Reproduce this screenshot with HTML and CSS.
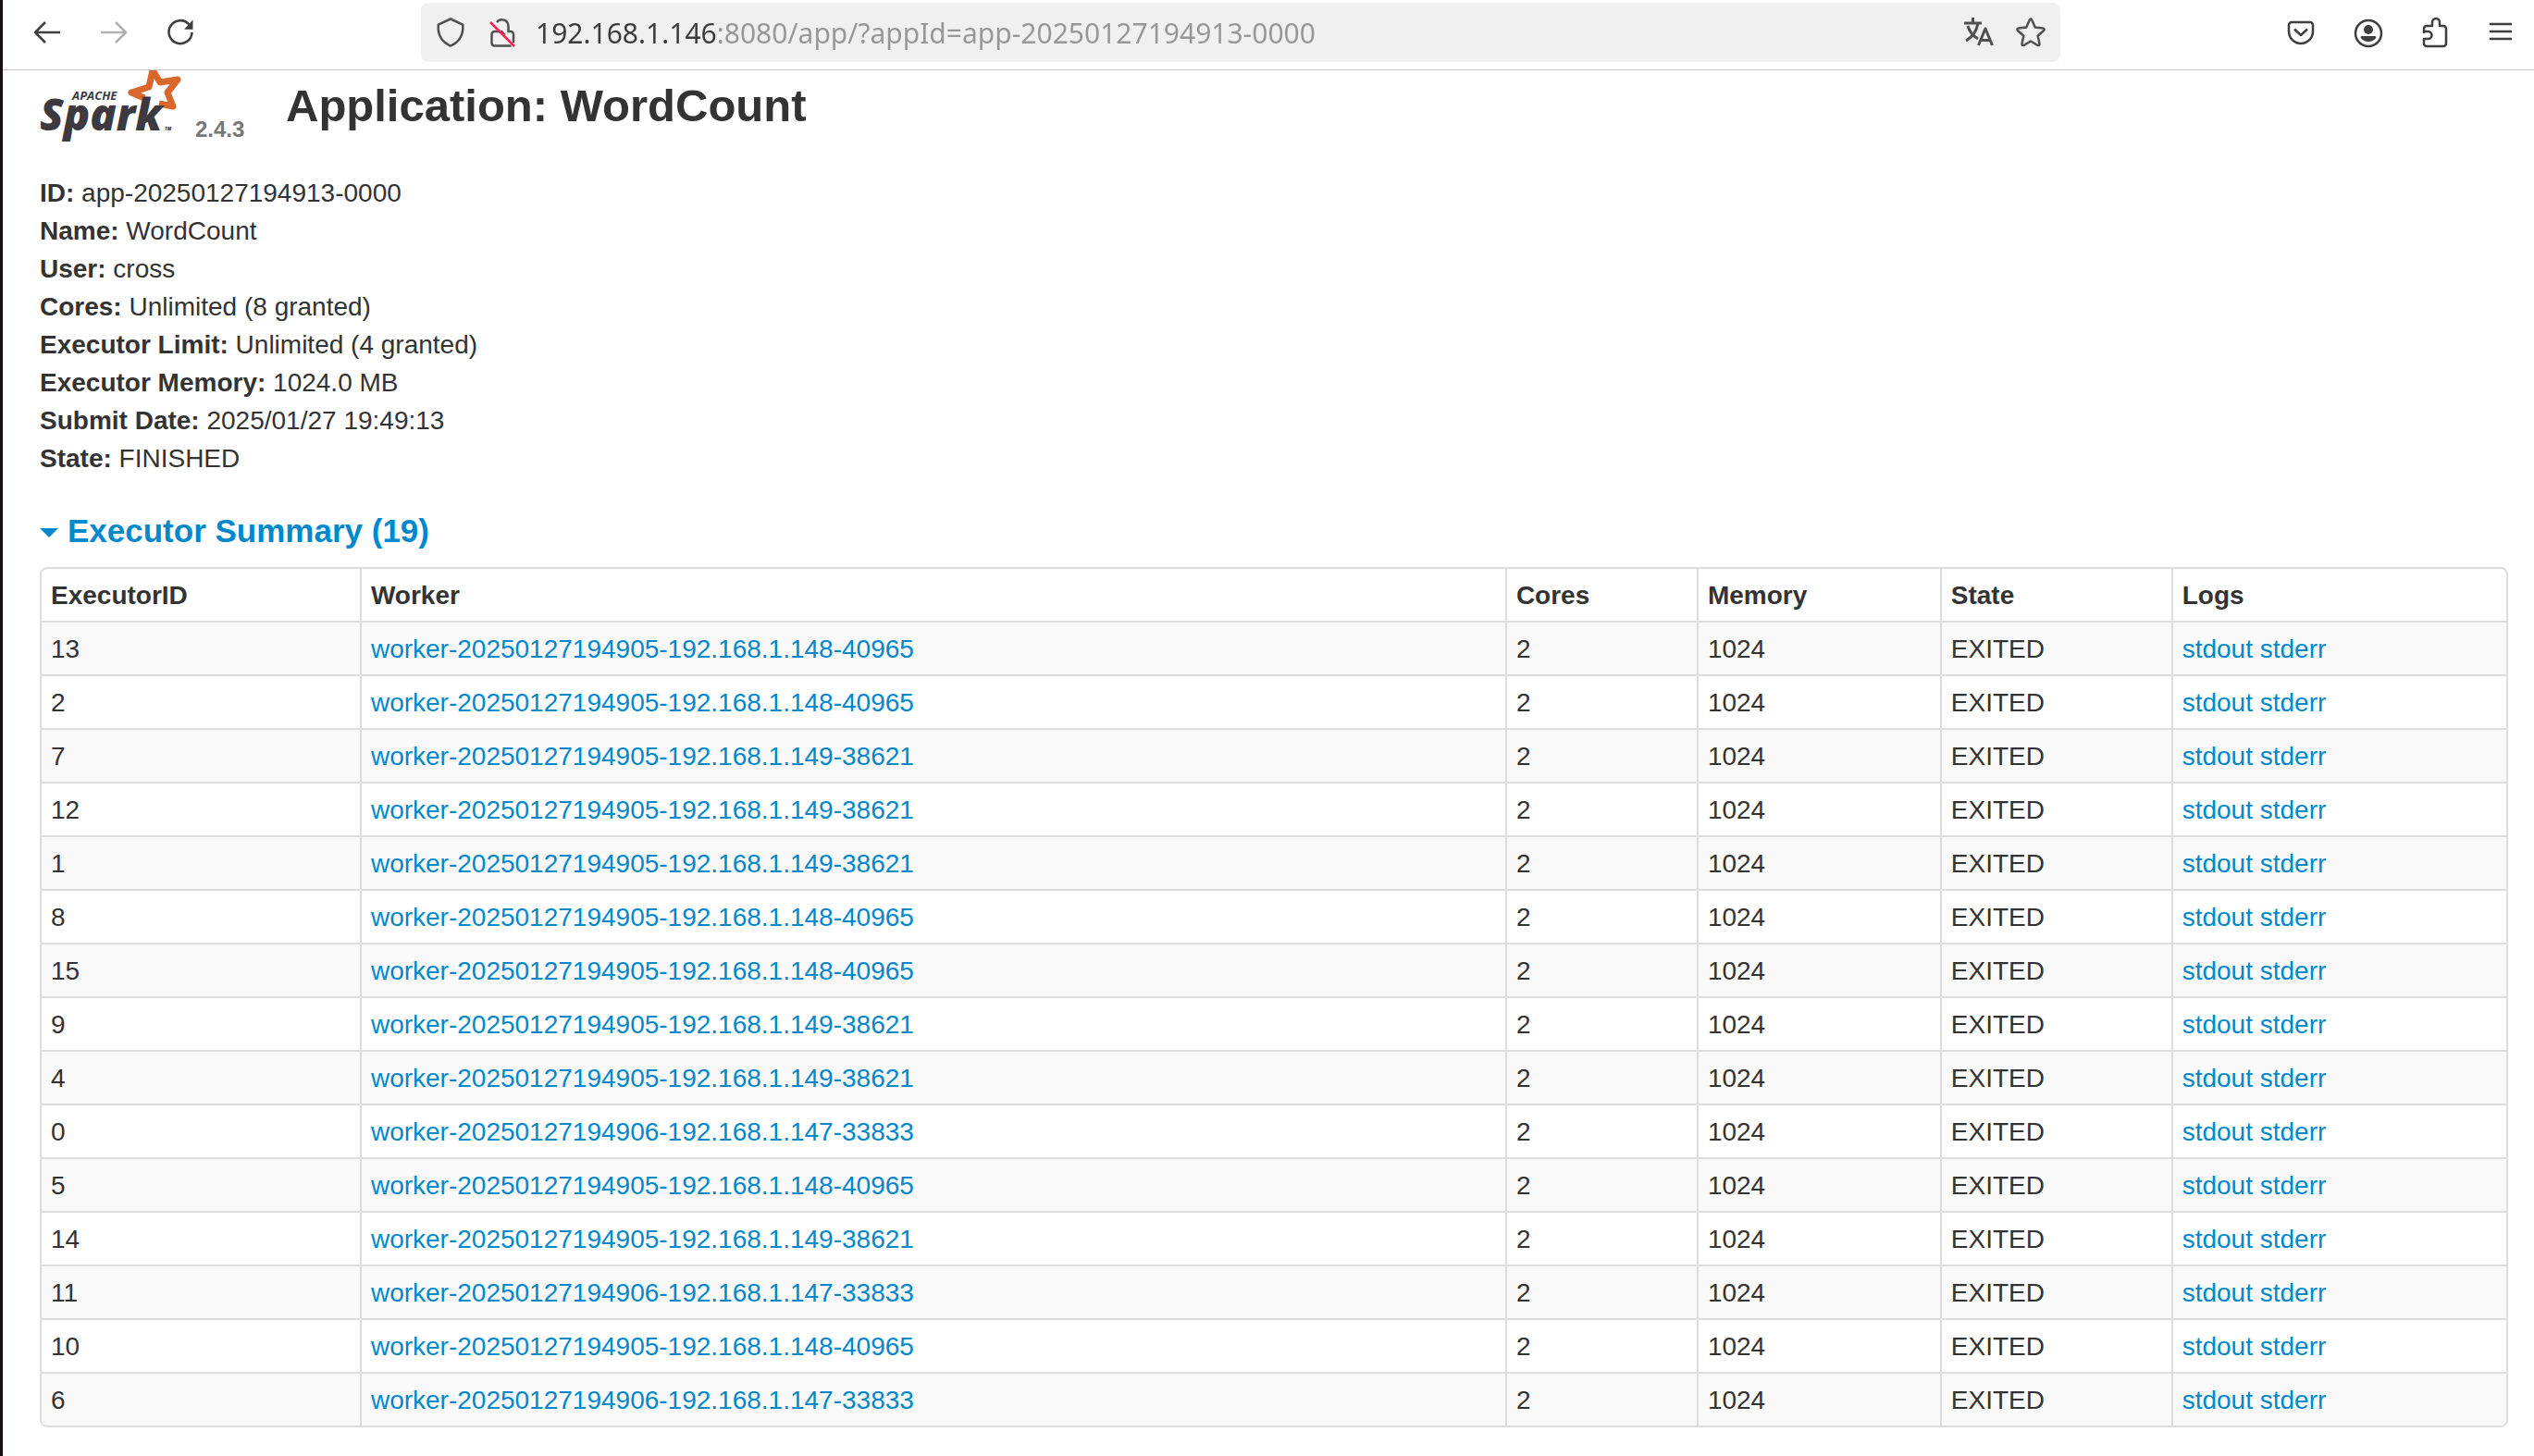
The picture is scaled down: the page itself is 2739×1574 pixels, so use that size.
FILE: index.html
```html
<!DOCTYPE html>
<html lang="en">
<head>
<meta charset="utf-8">
<title>Application: WordCount</title>
<link rel="stylesheet" href="styles.css">
</head>
<body>
<nav class="toolbar" aria-label="Browser">
  <button class="tool" type="button" aria-label="Back"><svg class="icon" viewBox="0 0 32 32"><path d="M30 16H4M14 5 3 16l11 11"/></svg></button>
  <button class="tool" type="button" aria-label="Forward" disabled><svg class="icon" viewBox="0 0 32 32"><path d="M2 16h26M18 5l11 11-11 11"/></svg></button>
  <button class="tool" type="button" aria-label="Reload"><svg class="icon" viewBox="0 0 32 32"><path d="M28.500 16A12.500 12.500 0 1 1 25.500 7.500"/><path class="solid" d="M29.500 2.500v10.200h-9.500z"/></svg></button>
  <div class="urlbar">
    <button class="inner" type="button" aria-label="Tracking protection"><svg class="icon" viewBox="0 0 32 32"><path d="M16 1.500 29.200 7.600c.8 9.500-3 18.500-13.200 23C5.800 26.100 2 17.100 2.800 7.600z"/></svg></button>
    <button class="inner" type="button" aria-label="Connection not secure"><svg class="icon" viewBox="0 0 32 32"><path d="M10 5a7 7 0 0 1 12.500 4v6H25a3 3 0 0 1 3 3v9M14 15H7.500a3 3 0 0 0-3 3v9.500a3 3 0 0 0 3 3h18"/><path class="solid" d="M6 14h10l4 5z"/><path class="strike" d="M3 5l26 26"/></svg></button>
    <input class="address" type="text" aria-label="Address" value="192.168.1.146:8080/app/?appId=app-20250127194913-0000">
    <button class="inner" type="button" aria-label="Translate"><svg class="icon" viewBox="0 0 32 32"><path class="bold" d="M0 6h19M9.500 0v6M15 6C13.500 15 9 21 2 25M4 9c2 7 6 11 11 14"/><path class="bold" d="M15.500 30 23 12l7.500 18M18 24.500h10"/></svg></button>
    <button class="inner" type="button" aria-label="Bookmark"><svg class="icon" viewBox="0 0 32 32"><path d="M14.600 2.900q1.400-2.600 2.800 0l3.300 7.700 8.300.8q2.800.6.900 2.800l-6.300 5.500 1.900 8.400q.2 2.800-2.400 1.700L16 25.500l-7.100 4.300q-2.600 1.100-2.400-1.700l1.900-8.400-6.300-5.500q-1.900-2.200.9-2.800l8.300-.8z"/></svg></button>
  </div>
  <button class="tool" type="button" aria-label="Save to Pocket"><svg class="icon" viewBox="0 0 32 32"><path d="M6 5h20a3 3 0 0 1 3 3v7a13 13 0 0 1-26 0V8a3 3 0 0 1 3-3z"/><path d="M9 12.500l7 6.500 7-6.500"/></svg></button>
  <button class="tool" type="button" aria-label="Account"><svg class="icon" viewBox="0 0 32 32"><circle cx="17" cy="17" r="14"/><circle class="solid" cx="17" cy="13" r="5"/><path class="solid" d="M8.500 21.500q0-1.500 1.500-1.500h14q1.500 0 1.500 1.500c-2 3-5 4.500-8.500 4.500s-6.500-1.500-8.500-4.500z"/></svg></button>
  <button class="tool" type="button" aria-label="Extensions"><svg class="icon" viewBox="0 0 32 32"><path d="M5 17V12a3 3 0 0 1 3-3h6V5a4 4 0 0 1 8 0v4h4a3 3 0 0 1 3 3v16a3 3 0 0 1-3 3H8a3 3 0 0 1-3-3v-5h4.500a4 4 0 0 0 0-8H5"/></svg></button>
  <button class="tool" type="button" aria-label="Menu"><svg class="icon" viewBox="0 0 32 32"><path d="M4 7h24M4 15h24M4 23h24"/></svg></button>
</nav>

<main class="page">
  <header class="title">
    <a class="brand" href="#">
      <svg class="logo" viewBox="0 0 154 80" role="img" aria-label="Apache Spark">
        <path class="star" d="M113 30 99 24l19-6 4-18 8 13 19-3-11 14 6 15-15-3"/>
        <text class="apache" x="35" y="32">APACHE</text>
        <text class="spark" x="0" y="65">Spark</text>
        <text class="mark" x="135" y="65">TM</text>
      </svg>
      <span class="version">2.4.3</span>
    </a>
    <h1>Application: WordCount</h1>
  </header>

  <ul class="facts">
    <li><strong>ID:</strong> app-20250127194913-0000</li>
    <li><strong>Name:</strong> WordCount</li>
    <li><strong>User:</strong> cross</li>
    <li><strong>Cores:</strong> Unlimited (8 granted)</li>
    <li><strong>Executor Limit:</strong> Unlimited (4 granted)</li>
    <li><strong>Executor Memory:</strong> 1024.0 MB</li>
    <li><strong>Submit Date:</strong> 2025/01/27 19:49:13</li>
    <li><strong>State:</strong> FINISHED</li>
  </ul>

  <h2><a class="toggle" href="#executors"><span class="caret"></span>Executor Summary (19)</a></h2>

  <table class="executors" id="executors">
    <colgroup><col class="c-id"><col class="c-worker"><col class="c-cores"><col class="c-memory"><col class="c-state"><col class="c-logs"></colgroup>
    <thead>
      <tr><th>ExecutorID</th><th>Worker</th><th>Cores</th><th>Memory</th><th>State</th><th>Logs</th></tr>
    </thead>
    <tbody>
      <tr><td>13</td><td><a href="#">worker-20250127194905-192.168.1.148-40965</a></td><td>2</td><td>1024</td><td>EXITED</td><td><a href="#">stdout</a> <a href="#">stderr</a></td></tr>
      <tr><td>2</td><td><a href="#">worker-20250127194905-192.168.1.148-40965</a></td><td>2</td><td>1024</td><td>EXITED</td><td><a href="#">stdout</a> <a href="#">stderr</a></td></tr>
      <tr><td>7</td><td><a href="#">worker-20250127194905-192.168.1.149-38621</a></td><td>2</td><td>1024</td><td>EXITED</td><td><a href="#">stdout</a> <a href="#">stderr</a></td></tr>
      <tr><td>12</td><td><a href="#">worker-20250127194905-192.168.1.149-38621</a></td><td>2</td><td>1024</td><td>EXITED</td><td><a href="#">stdout</a> <a href="#">stderr</a></td></tr>
      <tr><td>1</td><td><a href="#">worker-20250127194905-192.168.1.149-38621</a></td><td>2</td><td>1024</td><td>EXITED</td><td><a href="#">stdout</a> <a href="#">stderr</a></td></tr>
      <tr><td>8</td><td><a href="#">worker-20250127194905-192.168.1.148-40965</a></td><td>2</td><td>1024</td><td>EXITED</td><td><a href="#">stdout</a> <a href="#">stderr</a></td></tr>
      <tr><td>15</td><td><a href="#">worker-20250127194905-192.168.1.148-40965</a></td><td>2</td><td>1024</td><td>EXITED</td><td><a href="#">stdout</a> <a href="#">stderr</a></td></tr>
      <tr><td>9</td><td><a href="#">worker-20250127194905-192.168.1.149-38621</a></td><td>2</td><td>1024</td><td>EXITED</td><td><a href="#">stdout</a> <a href="#">stderr</a></td></tr>
      <tr><td>4</td><td><a href="#">worker-20250127194905-192.168.1.149-38621</a></td><td>2</td><td>1024</td><td>EXITED</td><td><a href="#">stdout</a> <a href="#">stderr</a></td></tr>
      <tr><td>0</td><td><a href="#">worker-20250127194906-192.168.1.147-33833</a></td><td>2</td><td>1024</td><td>EXITED</td><td><a href="#">stdout</a> <a href="#">stderr</a></td></tr>
      <tr><td>5</td><td><a href="#">worker-20250127194905-192.168.1.148-40965</a></td><td>2</td><td>1024</td><td>EXITED</td><td><a href="#">stdout</a> <a href="#">stderr</a></td></tr>
      <tr><td>14</td><td><a href="#">worker-20250127194905-192.168.1.149-38621</a></td><td>2</td><td>1024</td><td>EXITED</td><td><a href="#">stdout</a> <a href="#">stderr</a></td></tr>
      <tr><td>11</td><td><a href="#">worker-20250127194906-192.168.1.147-33833</a></td><td>2</td><td>1024</td><td>EXITED</td><td><a href="#">stdout</a> <a href="#">stderr</a></td></tr>
      <tr><td>10</td><td><a href="#">worker-20250127194905-192.168.1.148-40965</a></td><td>2</td><td>1024</td><td>EXITED</td><td><a href="#">stdout</a> <a href="#">stderr</a></td></tr>
      <tr><td>6</td><td><a href="#">worker-20250127194906-192.168.1.147-33833</a></td><td>2</td><td>1024</td><td>EXITED</td><td><a href="#">stdout</a> <a href="#">stderr</a></td></tr>
    </tbody>
  </table>
</main>
</body>
</html>
```
FILE: styles.css
```css
* {
  box-sizing: border-box;
}

body {
  margin: 0;
  min-height: 100vh;
  border-left: 3px solid #1a0f14;
  background: #fff;
  color: #333;
  font: 28px/40px "Liberation Sans", Arial, sans-serif;
}

a {
  color: #08c;
  text-decoration: none;
}

/* Browser toolbar */
.toolbar {
  display: flex;
  padding: 3px 0 8px 12px;
  border-bottom: 1px solid #c6c6c8;
}

.toolbar button {
  display: flex;
  align-items: center;
  justify-content: center;
  height: 64px;
  padding: 0;
  border: 0;
  background: none;
  color: #3e3e3e;
}

.toolbar .tool {
  width: 72px;
}

.toolbar .tool:disabled {
  color: #b1b1b1;
}

.toolbar .inner {
  color: #505050;
}

.urlbar {
  display: flex;
  flex: 1;
  gap: 24px;
  margin: 0 224px;
  padding: 0 16px;
  border-radius: 8px;
  background: #f0f0f0;
}

.address {
  flex: 1;
  min-width: 0;
  height: 64px;
  margin-left: -4px;
  padding: 0;
  border: 0;
  outline: 0;
  background: linear-gradient(to right, #3b3b3b 196px, #979797 196px);
  -webkit-background-clip: text;
  background-clip: text;
  color: transparent;
  font: 30px "Noto Sans", sans-serif;
}

.icon {
  width: 32px;
  height: 32px;
  overflow: visible;
  fill: none;
  stroke: currentColor;
  stroke-width: 2.500;
  stroke-linejoin: round;
}

.icon .solid {
  fill: currentColor;
  stroke: none;
}

.icon .bold {
  stroke-width: 3;
}

.icon .strike {
  stroke: #ff1f57;
}

/* Spark page */
.page {
  padding: 0 28px 32px 40px;
}

.title {
  display: flex;
}

.brand {
  display: flex;
  gap: 14px;
  width: 266px;
}

.logo {
  width: 154px;
  height: 80px;
}

.star {
  fill: none;
  stroke: #d9662a;
  stroke-width: 7;
  stroke-linejoin: round;
}

.logo text {
  fill: #3c3a3e;
  font-family: "Open Sans", sans-serif;
  font-style: italic;
  font-weight: 800;
}

.logo .apache {
  font-size: 13px;
  font-weight: 700;
}

.logo .spark {
  font-size: 47px;
}

.logo .mark {
  font-size: 5px;
}

.version {
  padding-top: 44px;
  color: #777;
  font-size: 24px;
  font-weight: 700;
}

h1 {
  margin: 0;
  font-size: 49px;
  line-height: 76px;
}

.facts {
  margin: 28px 0 38px;
  padding: 0;
  line-height: 41px;
  list-style: none;
}

h2 {
  margin: 0 0 19px;
  font-size: 35px;
  line-height: 40px;
}

.toggle {
  display: flex;
  align-items: center;
  gap: 10px;
}

.caret {
  margin-top: 4px;
  border: 10px solid transparent;
  border-top-color: #08c;
  border-bottom: 0;
}

.executors {
  width: 100%;
  table-layout: fixed;
  border: 2px solid #ddd;
  border-radius: 8px;
  border-collapse: separate;
  border-spacing: 0;
  overflow: hidden;
}

.c-id { width: 12.91%; }
.c-worker { width: 46.47%; }
.c-cores { width: 7.77%; }
.c-memory { width: 9.87%; }
.c-state { width: 9.38%; }
.c-logs { width: 13.6%; }

th,
td {
  padding: 9px 10px 7px;
  text-align: left;
}

th + th,
td + td {
  border-left: 2px solid #ddd;
}

td {
  border-top: 2px solid #ddd;
}

tbody tr:nth-child(odd) {
  background: #f9f9f9;
}
```
